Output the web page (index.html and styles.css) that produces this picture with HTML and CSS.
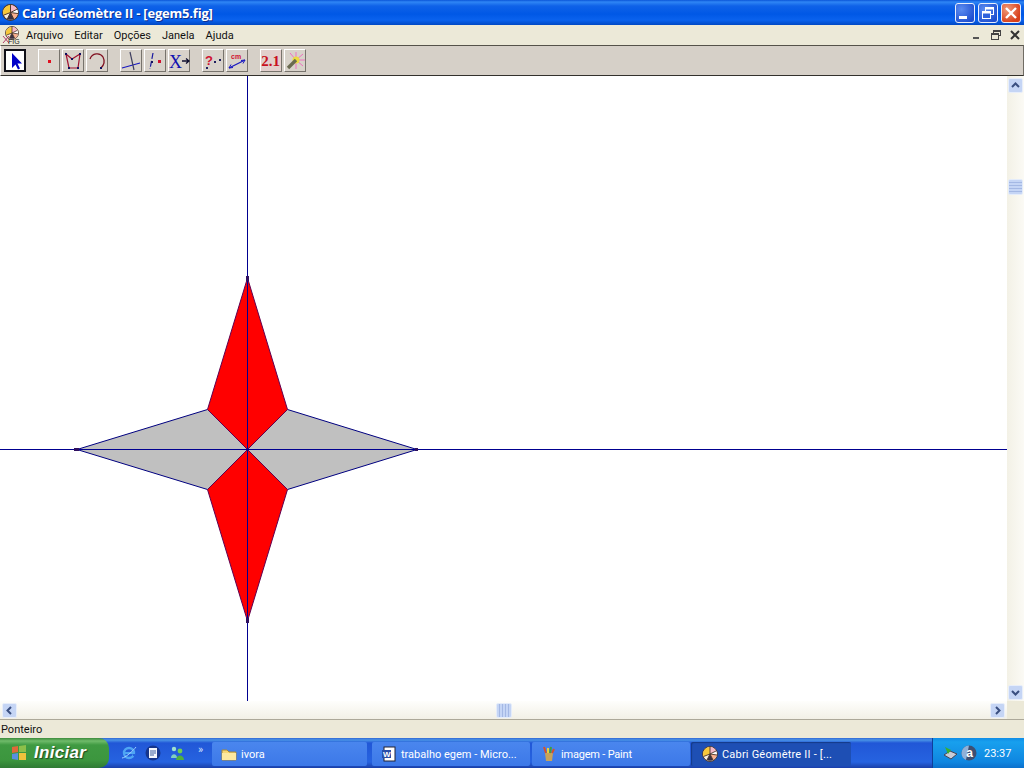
FILE: index.html
```html
<!DOCTYPE html>
<html lang="pt">
<head>
<meta charset="utf-8">
<title>Cabri Géomètre II - [egem5.fig]</title>
<link rel="stylesheet" href="styles.css">
</head>
<body>
<svg class="defs" width="0" height="0" aria-hidden="true">
  <symbol id="cabri" viewBox="0 0 16 16">
    <circle cx="8" cy="8" r="7.4" fill="#fbeedd" stroke="#4a3428"/>
    <path d="M8 8V1A7 7 0 0 0 1.5 10.5Z" fill="#f8c83a"/>
    <path d="M8 8L8 1A7 7 0 0 1 14 5Z" fill="#f6b8c8"/>
    <path d="M8 8L14 5A7 7 0 0 1 15 9Z" fill="#fff"/>
    <path d="M8 8L15 9A7 7 0 0 1 11 14Z" fill="#f8b090"/>
    <path d="M8 8L11 14A7 7 0 0 1 5 14Z" fill="#3a3040"/>
    <path d="M8 1V8L1.5 10.5M8 8L14 5M8 8L15 9M8 8L11 14M8 8L5 14" stroke="#4a3428" stroke-width=".9" fill="none"/>
  </symbol>
  <symbol id="folder" viewBox="0 0 16 16">
    <path d="M1 4H6L8 6H15V14H1Z" fill="#f7d774" stroke="#a88a3a"/>
    <path d="M1 7H15V14H1Z" fill="#fde9a0"/>
  </symbol>
</svg>

<div class="window">
  <header class="titlebar">
    <svg class="title-icon"><use href="#cabri"/></svg>
    <span class="title-text">Cabri Géomètre II - [egem5.fig]</span>
    <div class="caption-buttons">
      <button class="cap cap-blue" aria-label="Minimizar">
        <svg width="20" height="20" viewBox="0 0 20 20"><rect x="4" y="13" width="8" height="3" fill="#fff"/></svg>
      </button>
      <button class="cap cap-blue" aria-label="Restaurar">
        <svg width="20" height="20" viewBox="0 0 20 20" fill="none" stroke="#fff"><rect x="7.5" y="4.5" width="8" height="7"/><path d="M7.5 5.5H15.5" stroke-width="2"/><rect x="4.5" y="8.5" width="8" height="7" fill="#2f62dc"/><path d="M4.5 9.5H12.5" stroke-width="2"/></svg>
      </button>
      <button class="cap cap-red" aria-label="Fechar">
        <svg width="20" height="20" viewBox="0 0 20 20"><path d="M5 5L15 15M15 5L5 15" stroke="#fff" stroke-width="2.4"/></svg>
      </button>
    </div>
  </header>

  <nav class="menubar">
    <svg class="doc-icon" width="22" height="20" viewBox="0 0 22 20">
      <use href="#cabri" x="4" y="1" width="14" height="14"/>
      <path d="M2 11L8 18M8 11L2 18" stroke="#a01050" stroke-width=".8"/>
      <text x="7" y="19" class="doc-fig">FIG</text>
    </svg>
    <span class="menu-item">Arquivo</span>
    <span class="menu-item">Editar</span>
    <span class="menu-item">Opções</span>
    <span class="menu-item">Janela</span>
    <span class="menu-item">Ajuda</span>
    <div class="mdi-buttons">
      <svg width="12" height="12" viewBox="0 0 12 12"><rect x="2" y="8" width="6" height="2" fill="#555"/></svg>
      <svg width="12" height="12" viewBox="0 0 12 12" fill="none" stroke="#444"><rect x="3.5" y="1.5" width="7" height="5"/><rect x="1.5" y="4.5" width="7" height="6" fill="#ece9d8"/><path d="M1.5 5.5H8.5M3.5 2.5H10.5"/></svg>
      <svg width="12" height="12" viewBox="0 0 12 12"><path d="M2 2L10 10M10 2L2 10" stroke="#333" stroke-width="2"/></svg>
    </div>
  </nav>

  <div class="toolbar">
    <div class="tool tool-on"><svg width="22" height="22" viewBox="0 0 22 22"><path d="M8 3V18L11.5 14.5L14 19.5L16 18.5L13.5 13.5H18Z" fill="#0000c8"/></svg></div>
    <div class="tool group"><svg width="22" height="22" viewBox="0 0 22 22"><rect x="10" y="10" width="3" height="3" fill="#e01020"/></svg></div>
    <div class="tool"><svg width="22" height="22" viewBox="0 0 22 22" fill="none"><path d="M4 4L10 9L18 4L16 18H7Z" stroke="#a01030" stroke-width="1.2"/><g fill="#101060"><rect x="3" y="3" width="2" height="2"/><rect x="17" y="3" width="2" height="2"/><rect x="6" y="17" width="2" height="2"/><rect x="15" y="17" width="2" height="2"/><rect x="9" y="8" width="2" height="2"/></g></svg></div>
    <div class="tool"><svg width="22" height="22" viewBox="0 0 22 22" fill="none"><path d="M4 9C6 3 14 2 17 7C19 11 18 15 15 18" stroke="#801020" stroke-width="1.3"/><rect x="14" y="17" width="2" height="2" fill="#101060"/></svg></div>
    <div class="tool group"><svg width="22" height="22" viewBox="0 0 22 22" fill="none"><path d="M2 18L20 13" stroke="#1818c0" stroke-width="1.2"/><path d="M10 2L14 20" stroke="#404060" stroke-width="1.2"/></svg></div>
    <div class="tool"><svg width="22" height="22" viewBox="0 0 22 22" fill="none"><path d="M9 3L6 19" stroke="#1818a0" stroke-width="1.2" stroke-dasharray="6 2"/><rect x="14" y="10" width="3" height="3" fill="#d01030"/><rect x="7" y="11" width="2" height="2" fill="#101060"/></svg></div>
    <div class="tool"><svg width="22" height="22" viewBox="0 0 22 22"><text x="1" y="18" class="tool-x">X</text><path d="M14 11H20M18 8.5L21 11L18 13.5" stroke="#101030" stroke-width="1.3" fill="none"/></svg></div>
    <div class="tool group"><svg width="22" height="22" viewBox="0 0 22 22"><text x="3" y="15" class="tool-q">?</text><g fill="#202060"><rect x="4" y="17" width="2" height="2"/><rect x="12" y="11" width="2" height="2"/><rect x="17" y="9" width="2" height="2"/></g></svg></div>
    <div class="tool"><svg width="22" height="22" viewBox="0 0 22 22"><text x="5" y="9" class="tool-cm">cm</text><path d="M3 18L19 10" stroke="#1818c0" stroke-width="1.3"/><path d="M3 18L7 17.5M3 18L5 14.5M19 10L15 10.5M19 10L17 13.5" stroke="#1818c0"/></svg></div>
    <div class="tool tool-tint group"><svg width="22" height="22" viewBox="0 0 22 22"><text x="10.5" y="16" class="tool-num">2.1</text></svg></div>
    <div class="tool"><svg width="22" height="22" viewBox="0 0 22 22" fill="none"><path d="M12 10L6 3M12 10L12 2M12 10L19 4M12 10L21 10M12 10L19 16M12 10L12 19M12 10L5 16" stroke="#f070c0"/><circle cx="12" cy="10" r="3.5" fill="#ecdc40"/><path d="M4 18L12 10" stroke="#6a6a50" stroke-width="3.4"/></svg></div>
  </div>

  <main class="workspace">
    <div class="canvas">
      <svg class="figure" width="1007" height="625" viewBox="0 76 1007 625">
        <polygon points="247.5,449.5 207.5,409.5 77,449.5 207.5,489.5" class="gray"/>
        <polygon points="247.5,449.5 287.5,409.5 417,449.5 287.5,489.5" class="gray"/>
        <path class="edge" d="M207.5 409.5L77 449.5L207.5 489.5M287.5 409.5L417 449.5L287.5 489.5"/>
        <polygon points="247.5,449.5 207.5,409.5 247.5,278 287.5,409.5" class="red"/>
        <polygon points="247.5,449.5 207.5,489.5 247.5,621 287.5,489.5" class="red"/>
        <path class="axis" d="M247.5 76V701M0 449.5H1007"/>
        <rect x="74" y="448" width="5" height="3" class="point"/>
        <rect x="415" y="448" width="3" height="3" class="point"/>
        <rect x="246" y="276" width="3" height="5" class="point"/>
        <rect x="246" y="618" width="3" height="5" class="point"/>
      </svg>
    </div>
    <div class="vscroll">
      <div class="sbtn"><svg width="15" height="15" viewBox="0 0 15 15"><path d="M4 9L7.5 5.5L11 9" class="chev"/></svg></div>
      <div class="vthumb-space"><div class="vthumb"></div></div>
      <div class="sbtn"><svg width="15" height="15" viewBox="0 0 15 15"><path d="M4 6L7.5 9.5L11 6" class="chev"/></svg></div>
    </div>
  </main>

  <div class="hrow">
    <div class="hscroll">
      <div class="sbtn"><svg width="15" height="15" viewBox="0 0 15 15"><path d="M9 4L5.5 7.5L9 11" class="chev"/></svg></div>
      <div class="hthumb-space"><div class="hthumb"></div></div>
      <div class="sbtn"><svg width="15" height="15" viewBox="0 0 15 15"><path d="M6 4L9.5 7.5L6 11" class="chev"/></svg></div>
    </div>
  </div>

  <footer class="status">Ponteiro</footer>
</div>

<div class="taskbar">
  <div class="start">
    <svg width="18" height="18" viewBox="0 0 18 18"><path d="M2 3L8 2V8L2 9Z" fill="#e0683a"/><path d="M9 2L16 1V8L9 8Z" fill="#8cbf4a"/><path d="M2 10L8 9V16L2 15Z" fill="#5a8fe0"/><path d="M9 9L16 9V16L9 16Z" fill="#eec23c"/></svg>
    <span class="start-text">Iniciar</span>
  </div>
  <div class="quick">
    <svg width="16" height="16" viewBox="0 0 16 16" fill="none"><circle cx="8" cy="8" r="5" stroke="#4fa6f4" stroke-width="2.4"/><path d="M3 8H13" stroke="#4fa6f4" stroke-width="2"/><path d="M12 10L15 10" stroke="#2663e0" stroke-width="2"/><path d="M1 13C4 13 12 6 15 2" stroke="#9fd0ff"/></svg>
    <svg width="16" height="16" viewBox="0 0 16 16"><circle cx="8" cy="8" r="7.5" fill="#16358c"/><path d="M4 3H12V13H4Z" fill="#f4f6fc"/><path d="M5 6H11M5 8H11M5 10H9" stroke="#4060a0"/></svg>
    <svg width="16" height="16" viewBox="0 0 16 16"><circle cx="5" cy="4" r="2.2" fill="#9fe0d0"/><path d="M2 13C2 8 8 8 8 13Z" fill="#7fd0c0"/><circle cx="11" cy="6" r="2.4" fill="#6fd050"/><path d="M7 15C7 9 15 9 15 15Z" fill="#50b040"/></svg>
    <span class="chevron">»</span>
  </div>
  <div class="task task-ivora"><svg width="16" height="16"><use href="#folder"/></svg><span>ivora</span></div>
  <div class="task task-word">
    <svg width="16" height="16" viewBox="0 0 16 16"><rect x="3" y="1" width="11" height="14" fill="#fff" stroke="#223"/><rect x="1" y="4" width="9" height="8" fill="#2a4fa8"/><text x="2" y="11" class="word-w">W</text></svg>
    <span>trabalho egem - Micro...</span>
  </div>
  <div class="task task-paint">
    <svg width="16" height="16" viewBox="0 0 16 16"><path d="M4 7H12L11 15H5Z" fill="#c9a35a"/><path d="M5 7L3 1" stroke-width="2" stroke="#d8502a"/><path d="M7 7L7 2" stroke-width="2" stroke="#e8d040"/><path d="M9 7L10 1" stroke-width="2" stroke="#40a040"/><path d="M11 7L13 3" stroke-width="2" stroke="#d8502a"/></svg>
    <span>imagem - Paint</span>
  </div>
  <div class="task task-active"><svg width="16" height="16"><use href="#cabri"/></svg><span>Cabri Géomètre II - [...</span></div>
  <div class="tray">
    <svg width="16" height="16" viewBox="0 0 16 16"><path d="M2 10L9 14L15 9L8 6Z" fill="#c8ccd8" stroke="#445"/><path d="M3 2L9 5L6 9Z" fill="#38b030"/></svg>
    <svg width="16" height="16" viewBox="0 0 16 16"><circle cx="8" cy="8" r="7.5" fill="#3d4f72"/><path d="M8 .5A7.5 7.5 0 0 0 .5 8A7.5 7.5 0 0 0 5 15Z" fill="#8fb0d8"/><text x="8.5" y="12" class="tray-a">a</text></svg>
    <span class="clock">23:37</span>
  </div>
</div>
</body>
</html>
```
FILE: styles.css
```css
* { box-sizing: border-box; }
html, body { margin: 0; padding: 0; }
body {
  width: 1024px;
  height: 768px;
  overflow: hidden;
  display: flex;
  flex-direction: column;
  font-family: Roboto, "Liberation Sans", sans-serif;
  font-size: 11px;
  color: #111;
  background: #ece9d8;
}
.defs { position: absolute; }
svg { display: block; flex: none; }
.window { flex: 1; display: flex; flex-direction: column; min-height: 0; }

.titlebar {
  height: 25px;
  display: flex;
  align-items: center;
  padding: 0 2px 0 2px;
  background: linear-gradient(#0a55d8 0, #2f86f5 2px, #0f62e8 6px, #0058e6 14px, #0a62ee 20px, #0048c4 25px);
}
.title-icon { width: 17px; height: 17px; }
.title-text {
  margin-left: 3px;
  color: #fff;
  font: bold 13px "Open Sans", "Liberation Sans", sans-serif;
  letter-spacing: -.2px;
  text-shadow: 1px 1px 0 #0f2f90;
  white-space: nowrap;
}
.caption-buttons { margin-left: auto; display: flex; gap: 3px; padding-right: 1px; }
.cap {
  width: 20px;
  height: 20px;
  padding: 0;
  border: 1px solid #e8eefc;
  border-radius: 3px;
}
.cap svg { margin: -1px; }
.cap-blue { background: radial-gradient(circle at 30% 30%, #5b8cf0, #1f4fd0 80%); }
.cap-red { background: radial-gradient(circle at 30% 30%, #f09a78, #d8401a 75%); }

.menubar {
  height: 20px;
  display: flex;
  align-items: center;
  background: #ece9d8;
  padding-left: 1px;
}
.doc-icon { margin-right: 3px; }
.doc-fig { font: 7px "Liberation Sans", sans-serif; fill: #222; }
.menu-item { margin-right: 11px; white-space: nowrap; }
.mdi-buttons {
  margin-left: auto;
  display: flex;
  gap: 7px;
  padding-right: 3px;
}

.toolbar {
  height: 31px;
  display: flex;
  align-items: center;
  gap: 2px;
  padding-left: 3px;
  background: #d6d0c8;
  border-top: 1px solid #55524a;
  border-bottom: 1px solid #33312c;
  border-right: 1px solid #706c64;
  border-left: 1px solid #fff;
}
.tool {
  width: 22px;
  height: 23px;
  display: flex;
  align-items: center;
  justify-content: center;
  background: #d8d2ca;
  border: 1px solid;
  border-color: #fff #77736c #77736c #fff;
}
.tool svg { margin: -1px; }
.tool-on {
  background: #fff;
  border: 2px solid #101018;
}
.tool-tint { background: #e2cfcc; }
.group { margin-left: 10px; }
.tool-x { font: 18px "Liberation Serif", serif; fill: #1010b0; }
.tool-q { font: bold 13px "Liberation Sans", sans-serif; fill: #d01030; }
.tool-cm { font: bold 7px "Liberation Sans", sans-serif; fill: #d01030; }
.tool-num { font: bold 15px "Liberation Serif", serif; fill: #c80f20; text-anchor: middle; }

.workspace { flex: 1; display: flex; min-height: 0; }
.canvas { flex: 1; background: #fff; position: relative; overflow: hidden; }
.figure { position: absolute; left: 0; top: 0; }
.gray { fill: #c0c0c0; }
.edge { fill: none; stroke: #000080; stroke-width: 1; }
.red { fill: #ff0000; stroke: #600050; stroke-width: 1; }
.axis { stroke: #000090; stroke-width: 1; fill: none; }
.point { fill: #301060; }

.vscroll {
  width: 17px;
  display: flex;
  flex-direction: column;
  align-items: center;
  padding: 2px 0 1px;
  background: linear-gradient(90deg, #f3f1e6, #fbfaf5);
}
.sbtn {
  width: 15px;
  height: 15px;
  flex: none;
  border-radius: 2px;
  background: #c5d5f5;
  border: 1px solid #e8eefa;
  display: flex;
  align-items: center;
  justify-content: center;
}
.sbtn svg { margin: -1px; }
.chev { fill: none; stroke: #3a4f80; stroke-width: 2; }
.vthumb-space { flex: 1; width: 100%; padding-top: 86px; display: flex; justify-content: center; }
.vthumb {
  width: 15px;
  height: 16px;
  border-radius: 2px;
  border: 1px solid #e4ecfa;
  background: repeating-linear-gradient(#c5d5f5 0 2px, #a4b8e4 2px 3px);
}

.hrow { height: 18px; display: flex; background: #ece9d8; }
.hscroll {
  width: 1007px;
  display: flex;
  align-items: center;
  padding: 0 2px;
  background: linear-gradient(#fefefc, #f2f0e6);
}
.hthumb-space { flex: 1; padding-left: 479px; display: flex; }
.hthumb {
  width: 16px;
  height: 15px;
  border-radius: 2px;
  border: 1px solid #e4ecfa;
  background: repeating-linear-gradient(90deg, #c5d5f5 0 2px, #a4b8e4 2px 3px);
}

.status {
  height: 19px;
  padding-left: 1px;
  border-top: 1px solid #aca899;
  line-height: 19px;
  background: #ece9d8;
  white-space: nowrap;
}

.taskbar {
  height: 30px;
  flex: none;
  display: flex;
  align-items: stretch;
  color: #fff;
  background: linear-gradient(#3168d5 0, #4993e6 2px, #2157d7 5px, #2663e0 24px, #1a3fa8 30px);
}
.start {
  width: 109px;
  display: flex;
  align-items: center;
  gap: 6px;
  padding-left: 10px;
  border-radius: 0 10px 10px 0;
  background: linear-gradient(#3c8a3c 0, #6fbb6a 3px, #3f9a42 7px, #3c963e 22px, #2f7a34 30px);
}
.start-text {
  font: italic bold 17px "Liberation Sans", sans-serif;
  letter-spacing: .3px;
  text-shadow: 1px 1px 1px #1f4a20;
}
.quick {
  width: 103px;
  display: flex;
  align-items: center;
  gap: 8px;
  padding-left: 12px;
}
.chevron { font-size: 11px; margin: -8px 0 0 5px; color: #cfe0ff; }
.word-w { font: bold 8px "Liberation Sans", sans-serif; fill: #fff; }
.tray-a { font: bold 12px "Liberation Sans", sans-serif; fill: #fff; text-anchor: middle; }
.task {
  height: 24px;
  margin-top: 4px;
  display: flex;
  align-items: center;
  gap: 4px;
  padding-left: 9px;
  border-radius: 2px;
  background: linear-gradient(#4a86ee, #3c78e8);
  white-space: nowrap;
}
.task-ivora { width: 155px; margin-left: 0; }
.task-word { width: 158px; margin-left: 5px; }
.task-paint { width: 158px; margin-left: 2px; letter-spacing: -.2px; }
.task-active {
  width: 160px;
  margin-left: 1px;
  background: #1e4fb4;
  padding-left: 11px;
  gap: 4px;
  letter-spacing: .2px;
  box-shadow: inset 1px 1px 1px #153a88;
}
.tray {
  margin-left: auto;
  width: 92px;
  display: flex;
  align-items: center;
  gap: 3px;
  padding-left: 9px;
  border-left: 1px solid #0f3f9a;
  background: linear-gradient(#0f8ce6 0, #18a0ee 4px, #0f86e0 24px, #0b70cc 30px);
}
.clock { margin-left: 4px; }
```
